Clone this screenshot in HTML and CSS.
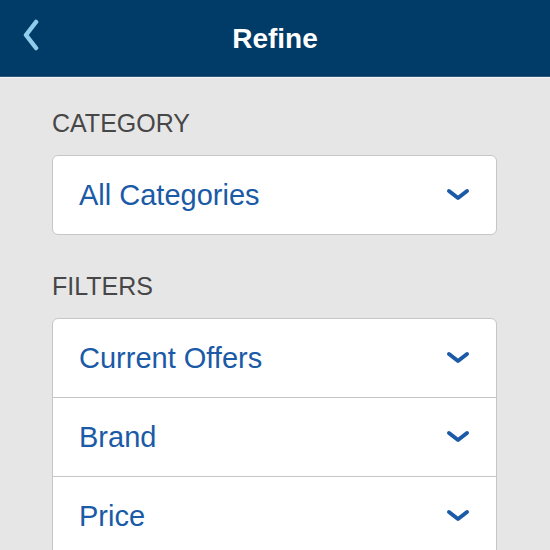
FILE: index.html
```html
<!DOCTYPE html>
<html>
<head>
  <title>Refine</title>
  <link rel="stylesheet" href="styles.css">
</head>
<body>
  <header class="topbar">
    <button class="back" aria-label="Back">
      <svg width="18" height="32" viewBox="0 0 18 32">
        <path d="M14 3 L4 16 L14 29" fill="none" stroke="#8fcdec" stroke-width="4.5" stroke-linecap="round" stroke-linejoin="round"/>
      </svg>
    </button>
    <h1>Refine</h1>
  </header>
  <main class="content">
    <div class="label">CATEGORY</div>
    <div class="field">
      <div class="row">
        <span>All Categories</span>
        <svg class="chev" width="24" height="14" viewBox="0 0 24 14"><path d="M3 3 L12 10 L21 3" fill="none" stroke="#1a5aa6" stroke-width="4" stroke-linecap="round" stroke-linejoin="round"/></svg>
      </div>
    </div>
    <div class="label">FILTERS</div>
    <div class="field">
      <div class="row">
        <span>Current Offers</span>
        <svg class="chev" width="24" height="14" viewBox="0 0 24 14"><path d="M3 3 L12 10 L21 3" fill="none" stroke="#1a5aa6" stroke-width="4" stroke-linecap="round" stroke-linejoin="round"/></svg>
      </div>
      <div class="row">
        <span>Brand</span>
        <svg class="chev" width="24" height="14" viewBox="0 0 24 14"><path d="M3 3 L12 10 L21 3" fill="none" stroke="#1a5aa6" stroke-width="4" stroke-linecap="round" stroke-linejoin="round"/></svg>
      </div>
      <div class="row">
        <span>Price</span>
        <svg class="chev" width="24" height="14" viewBox="0 0 24 14"><path d="M3 3 L12 10 L21 3" fill="none" stroke="#1a5aa6" stroke-width="4" stroke-linecap="round" stroke-linejoin="round"/></svg>
      </div>
    </div>
  </main>
</body>
</html>
```

FILE: styles.css
```css
:root {
  --navy: #003c67;
  --link: #1a5aa6;
  --page-bg: #e6e6e6;
  --line: #c6c6c6;
}

body {
  margin: 0;
  background: var(--page-bg);
  font-family: 'Liberation Sans', Arial, sans-serif;
  overflow: hidden;
}

.topbar {
  position: relative;
  height: 76px;
  background: var(--navy);
  display: flex;
  align-items: center;
  justify-content: center;
  border-bottom: 1px solid #2b5677;
  box-shadow: 0 1px 0 #f4f6f8;
}

.topbar h1 {
  margin: 2px 0 0;
  color: #fff;
  font-size: 28px;
  font-weight: bold;
}

.back {
  position: absolute;
  left: 22px;
  top: 19px;
  padding: 0;
  border: none;
  background: none;
  display: flex;
}

.content {
  padding: 31px 53px 0 52px;
  display: flex;
  flex-direction: column;
}

.label {
  font-size: 25px;
  line-height: 30px;
  color: #474747;
  margin-bottom: 17px;
}

.field {
  background: #fff;
  border: 1px solid var(--line);
  border-radius: 6px;
  margin-bottom: 36px;
}

.row {
  height: 78px;
  display: flex;
  align-items: center;
  justify-content: space-between;
  padding: 0 26px 0 26px;
  font-size: 29px;
  color: var(--link);
}

.row + .row {
  border-top: 1px solid var(--line);
}

.chev {
  display: block;
}
```
